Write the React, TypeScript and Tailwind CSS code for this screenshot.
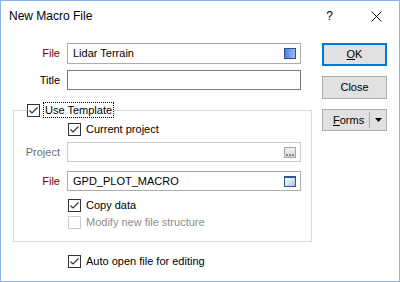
import React from "react";

const font = { fontFamily: '"Liberation Sans", Arial, sans-serif' };

function Check({ checked = true, disabled = false }: { checked?: boolean; disabled?: boolean }) {
  return (
    <span
      className={`flex h-[13px] w-[13px] shrink-0 items-center justify-center border bg-white ${
        disabled ? "border-[#cccccc]" : "border-[#333333]"
      }`}
    >
      {checked && (
        <svg width="11" height="11" viewBox="0 0 11 11">
          <path d="M1.5 5.5 L4 8 L9.5 2.5" fill="none" stroke="#333" strokeWidth="1.2" />
        </svg>
      )}
    </span>
  );
}

function BlueSquare() {
  return <span className="h-[11px] w-[12px] border border-[#2f4f86] bg-gradient-to-r from-[#4f7fe2] to-[#9cbaf3]" />;
}

function BrowseIcon() {
  return (
    <span className="flex h-[11px] w-[12px] items-end justify-center gap-[1px] border border-[#a6a6a6] bg-gradient-to-b from-[#f4f4f4] to-[#d4d4d4] pb-[1px]">
      <span className="h-[2px] w-[2px] bg-[#8a8a8a]" />
      <span className="h-[2px] w-[2px] bg-[#8a8a8a]" />
      <span className="h-[2px] w-[2px] bg-[#8a8a8a]" />
    </span>
  );
}

function WindowIcon() {
  return (
    <span className="h-[11px] w-[12px] border border-t-2 border-[#34558a] bg-gradient-to-br from-[#ffffff] to-[#a9c3ec]" />
  );
}

function Field({
  label,
  value,
  labelClass,
  border,
  icon,
  h = "h-[21px]",
}: {
  label: string;
  value?: string;
  labelClass: string;
  border: string;
  icon?: React.ReactNode;
  h?: string;
}) {
  return (
    <div className="flex items-center">
      <span className={`w-[59px] text-right ${labelClass}`}>{label}</span>
      <div className={`ml-[7px] flex w-[234px] items-center justify-between border bg-white pl-[5px] pr-[4px] ${h} ${border}`}>
        <span className="text-[#000]">{value}</span>
        {icon}
      </div>
    </div>
  );
}

function Btn({ children, focus = false }: { children: React.ReactNode; focus?: boolean }) {
  return (
    <div
      className={`flex h-[23px] w-[65px] items-center justify-center bg-[#e1e1e1] text-black ${
        focus ? "border-2 border-[#0078d7]" : "border border-[#adadad]"
      }`}
    >
      {children}
    </div>
  );
}

export default function App() {
  return (
    <div
      className="flex h-[282px] w-[400px] flex-col border border-[#88b6e8] bg-white text-[11px] text-black"
      style={font}
    >
      <div className="flex h-[30px] shrink-0 items-center">
        <span className="ml-[8px] text-[12px]">New Macro File</span>
        <span className="ml-auto text-[12px]">?</span>
        <svg className="ml-[38px] mr-[17px]" width="11" height="11" viewBox="0 0 11 11">
          <path d="M0.5 0.5 L10.5 10.5 M10.5 0.5 L0.5 10.5" stroke="#111" strokeWidth="1" />
        </svg>
      </div>

      <div className="flex">
        <div className="w-[311px] shrink-0">
          <div className="mt-[12px]">
            <Field label="File" value="Lidar Terrain" labelClass="text-[#7a0000]" border="border-[#adadad]" icon={<BlueSquare />} />
          </div>
          <div className="mt-[6px]">
            <Field label="Title" labelClass="text-black" border="border-[#7a7a7a]" h="h-[20px]" />
          </div>

          <fieldset className="ml-[12px] mt-[11px] w-[299px] border border-[#dcdcdc] px-0 pb-[10px] pt-0">
            <legend className="ml-[13px] flex h-[18px] items-center">
              <Check />
              <span className="ml-[3px] border border-dotted border-black px-[1px] leading-[14px]">Use Template</span>
            </legend>
            <div className="mt-[2px] flex h-[17px] items-center pl-[54px]">
              <Check />
              <span className="ml-[5px]">Current project</span>
            </div>
            <div className="mt-[4px] flex items-center">
              <span className="w-[46px] text-right text-[#6d6d6d]">Project</span>
              <div className="ml-[7px] flex h-[20px] w-[234px] items-center justify-end border border-[#cccccc] bg-white pr-[4px]">
                <BrowseIcon />
              </div>
            </div>
            <div className="mt-[9px] flex items-center">
              <span className="w-[46px] text-right text-[#7a0000]">File</span>
              <div className="ml-[7px] flex h-[20px] w-[234px] items-center justify-between border border-[#adadad] bg-white pl-[5px] pr-[4px]">
                <span>GPD_PLOT_MACRO</span>
                <WindowIcon />
              </div>
            </div>
            <div className="mt-[5px] flex h-[18px] items-center pl-[54px]">
              <Check />
              <span className="ml-[5px]">Copy data</span>
            </div>
            <div className="flex h-[17px] items-center pl-[54px]">
              <Check checked={false} disabled />
              <span className="ml-[5px] text-[#8d8d8d]">Modify new file structure</span>
            </div>
          </fieldset>

          <div className="mt-[11px] flex h-[17px] items-center pl-[67px]">
            <Check />
            <span className="ml-[5px]">Auto open file for editing</span>
          </div>
        </div>

        <div className="ml-[10px] mt-[12px] flex flex-col gap-[10px]">
          <Btn focus>
            <span>
              <span className="underline">O</span>K
            </span>
          </Btn>
          <Btn>Close</Btn>
          <div className="flex h-[22px] w-[65px] items-center border border-[#adadad] bg-[#e1e1e1]">
            <span className="ml-[10px] w-[35px]">
              <span className="underline">F</span>orms
            </span>
            <span className="ml-[1px] h-[16px] w-[1px] bg-[#adadad]" />
            <svg className="ml-[5px]" width="7" height="4" viewBox="0 0 7 4">
              <path d="M0 0 H7 L3.5 4 Z" fill="#000" />
            </svg>
          </div>
        </div>
      </div>
    </div>
  );
}
